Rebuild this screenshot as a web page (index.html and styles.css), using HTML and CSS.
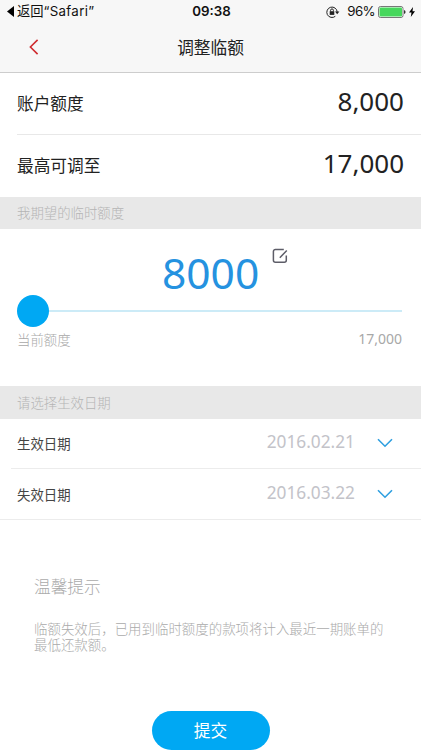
FILE: index.html
```html
<!DOCTYPE html>
<html lang="zh-CN">
<head>
<meta charset="utf-8">
<meta name="viewport" content="width=device-width, initial-scale=1">
<title>调整临额</title>
<link rel="stylesheet" href="styles.css">
</head>
<body>
<header class="top">
  <div class="status">
    <div class="status-back"><svg width="7" height="11" viewBox="0 0 7 11"><path d="M7 0v11L0 5.5z" fill="#000"/></svg><span>返回<span class="app">“Safari”</span></span></div>
    <div class="status-time">09:38</div>
    <div class="status-right">
      <svg class="lock" width="14" height="12" viewBox="0 0 14 12" fill="none" stroke="#222" stroke-width="1"><path d="M9.3 10.3A5.2 5.2 0 1 1 11.2 6"/><path d="M9 5.6h4.4L11.2 8.2z" fill="#222" stroke="none"/><path d="M3.7 5.2h4.6v3.7H3.7z" fill="#222" stroke="none"/><path d="M4.6 5.3V4.3a1.4 1.4 0 0 1 2.8 0v1"/></svg>
      <span class="percent">96%</span>
      <svg class="battery" width="28" height="12" viewBox="0 0 28 12"><rect x=".5" y=".5" width="24.5" height="11" rx="2" fill="#fff" stroke="#555" stroke-width=".8"/><rect x="1.5" y="1.5" width="22.5" height="9" rx="1" fill="#46d75c"/><path d="M26 4q1.6.3 1.6 2T26 8z" fill="#333"/></svg>
      <svg class="bolt" width="6" height="10" viewBox="0 0 6 10"><path d="M4 0L0 5.6h2.5L1.8 10 6 4.2H3.5z" fill="#000"/></svg>
    </div>
  </div>
  <div class="nav">
    <svg class="nav-back" width="10" height="16" viewBox="0 0 10 16" fill="none" stroke="#cf2c30" stroke-width="1.6"><path d="M8.6.9L1.4 8l7.2 7.1"/></svg>
    <h1>调整临额</h1>
  </div>
</header>
<main>
  <section class="limits">
    <div class="limit"><span>账户额度</span><span class="amount">8,000</span></div>
    <div class="limit"><span>最高可调至</span><span class="amount">17,000</span></div>
  </section>
  <h2 class="band">我期望的临时额度</h2>
  <section class="picker">
    <div class="chosen">
      <span class="value">8000</span>
      <svg class="edit" width="16" height="16" viewBox="0 0 16 16" fill="none" stroke="#5d5d68" stroke-width="1.5"><path d="M11.8 1.4H3.4a2 2 0 0 0-2 2v8.9a2 2 0 0 0 2 2h8.9a2 2 0 0 0 2-2V7.6M7.8 9.7l7-7.2"/></svg>
    </div>
    <div class="slider"><div class="knob"></div><div class="track"></div></div>
    <div class="range"><span>当前额度</span><span class="max">17,000</span></div>
  </section>
  <h2 class="band band-date">请选择生效日期</h2>
  <section class="dates">
    <div class="date"><span>生效日期</span><span class="day">2016.02.21</span><svg width="16" height="10" viewBox="0 0 16 10" fill="none" stroke="#2e9fe0" stroke-width="1.6"><path d="M1 1.2l7 7 7-7"/></svg></div>
    <div class="date"><span>失效日期</span><span class="day">2016.03.22</span><svg width="16" height="10" viewBox="0 0 16 10" fill="none" stroke="#2e9fe0" stroke-width="1.6"><path d="M1 1.2l7 7 7-7"/></svg></div>
  </section>
  <section class="tips">
    <h3>温馨提示</h3>
    <p>临额失效后，已用到临时额度的款项将计入最近一期账单的最低还款额。</p>
  </section>
  <button class="submit" type="button">提交</button>
</main>
</body>
</html>
```
FILE: styles.css
```css
* {
  box-sizing: border-box;
}

body {
  margin: 0;
  height: 750px;
  overflow: hidden;
  background: #fff;
  color: #222;
  font-family: "Noto Sans CJK SC", sans-serif;
}

h1, h2, h3, p {
  margin: 0;
  font-weight: 300;
}

svg {
  display: block;
  flex: none;
}

.top {
  height: 73px;
  background: #f7f7f7;
  border-bottom: 1px solid #cdcdcd;
}

.status {
  display: grid;
  grid-template-columns: 1fr 60px 1fr;
  height: 23px;
  align-items: center;
  color: #111;
  font-family: Inter, "Noto Sans CJK SC", sans-serif;
  font-size: 13.3px;
  line-height: 23px;
}

.status-back {
  display: flex;
  align-items: center;
  gap: 3px;
  padding-left: 7px;
  white-space: nowrap;
}

.app {
  letter-spacing: 0.3px;
}

.status-time {
  text-align: center;
  font-weight: 600;
  padding-left: 2px;
}

.status-right {
  display: flex;
  align-items: center;
  justify-content: flex-end;
  padding-right: 6px;
}

.percent {
  margin: 0 3px 0 7px;
  letter-spacing: -0.6px;
}

.bolt {
  margin-left: 3px;
}

.nav {
  display: grid;
  grid-template-columns: 29px 60px 1fr 89px;
  align-items: center;
  height: 48px;
}

.nav-back {
  grid-column: 2;
}

.nav h1 {
  font-size: 16.7px;
  font-weight: 400;
  line-height: 24px;
  text-align: center;
}

.limit {
  display: flex;
  justify-content: space-between;
  align-items: center;
  height: 62px;
  margin-left: 17px;
  padding: 0 17px 2px 0;
  font-size: 16.7px;
}

.limit:first-child {
  border-bottom: 1px solid #e8e8e8;
}

.amount {
  font-family: "Noto Sans", sans-serif;
  font-size: 26px;
  line-height: 36px;
  margin-top: -4px;
}

.band {
  height: 32px;
  padding-left: 17px;
  background: #e8e8e8;
  color: #b4b4b4;
  font-size: 13.4px;
  line-height: 31px;
}

.picker {
  height: 157px;
  padding: 14px 19px 0 17px;
}

.chosen {
  display: flex;
  align-items: flex-start;
  height: 52px;
  padding-left: 145px;
}

.value {
  width: 110px;
  color: #2592e0;
  font-family: "Noto Sans", sans-serif;
  font-size: 42.5px;
  line-height: 59px;
}

.edit {
  margin-top: 5px;
}

.slider {
  display: flex;
  align-items: center;
  height: 32px;
}

.knob {
  width: 32px;
  height: 32px;
  border-radius: 50%;
  background: #00a8f3;
}

.track {
  flex: 1;
  height: 2px;
  background: #ccebf7;
}

.range {
  display: flex;
  justify-content: space-between;
  margin-top: 2px;
  color: #a8a8a8;
  font-size: 13.4px;
  font-weight: 300;
  line-height: 20px;
}

.max {
  font-family: "Noto Sans", sans-serif;
  font-size: 14px;
  font-weight: 400;
}

.band-date {
  height: 33px;
  line-height: 33px;
}

.date {
  display: flex;
  align-items: center;
  height: 50px;
  margin-left: 11px;
  padding: 0 28px 1px 6px;
  color: #444;
  font-size: 13.4px;
}

.date:first-child {
  border-bottom: 1px solid #ececec;
}

.date:last-child {
  height: 51px;
  margin-left: 0;
  padding-left: 17px;
  border-bottom: 1px solid #ececec;
}

.day {
  margin: -2px 22px 0 auto;
  color: #c3c3c9;
  font-family: "Noto Sans", sans-serif;
  font-size: 17.3px;
  line-height: 24px;
}

.tips {
  height: 191px;
  padding: 54px 34px 0;
  color: #aaa;
}

.tips h3 {
  font-size: 16.7px;
  line-height: 24px;
}

.tips p {
  margin-top: 22px;
  font-size: 13.45px;
  line-height: 16px;
}

.submit {
  display: block;
  width: 118px;
  height: 39px;
  margin: 0 auto;
  padding: 0;
  border: 0;
  border-radius: 20px;
  background: #00a8f3;
  color: #fff;
  font-family: inherit;
  font-size: 16.7px;
  line-height: 39px;
}
```
